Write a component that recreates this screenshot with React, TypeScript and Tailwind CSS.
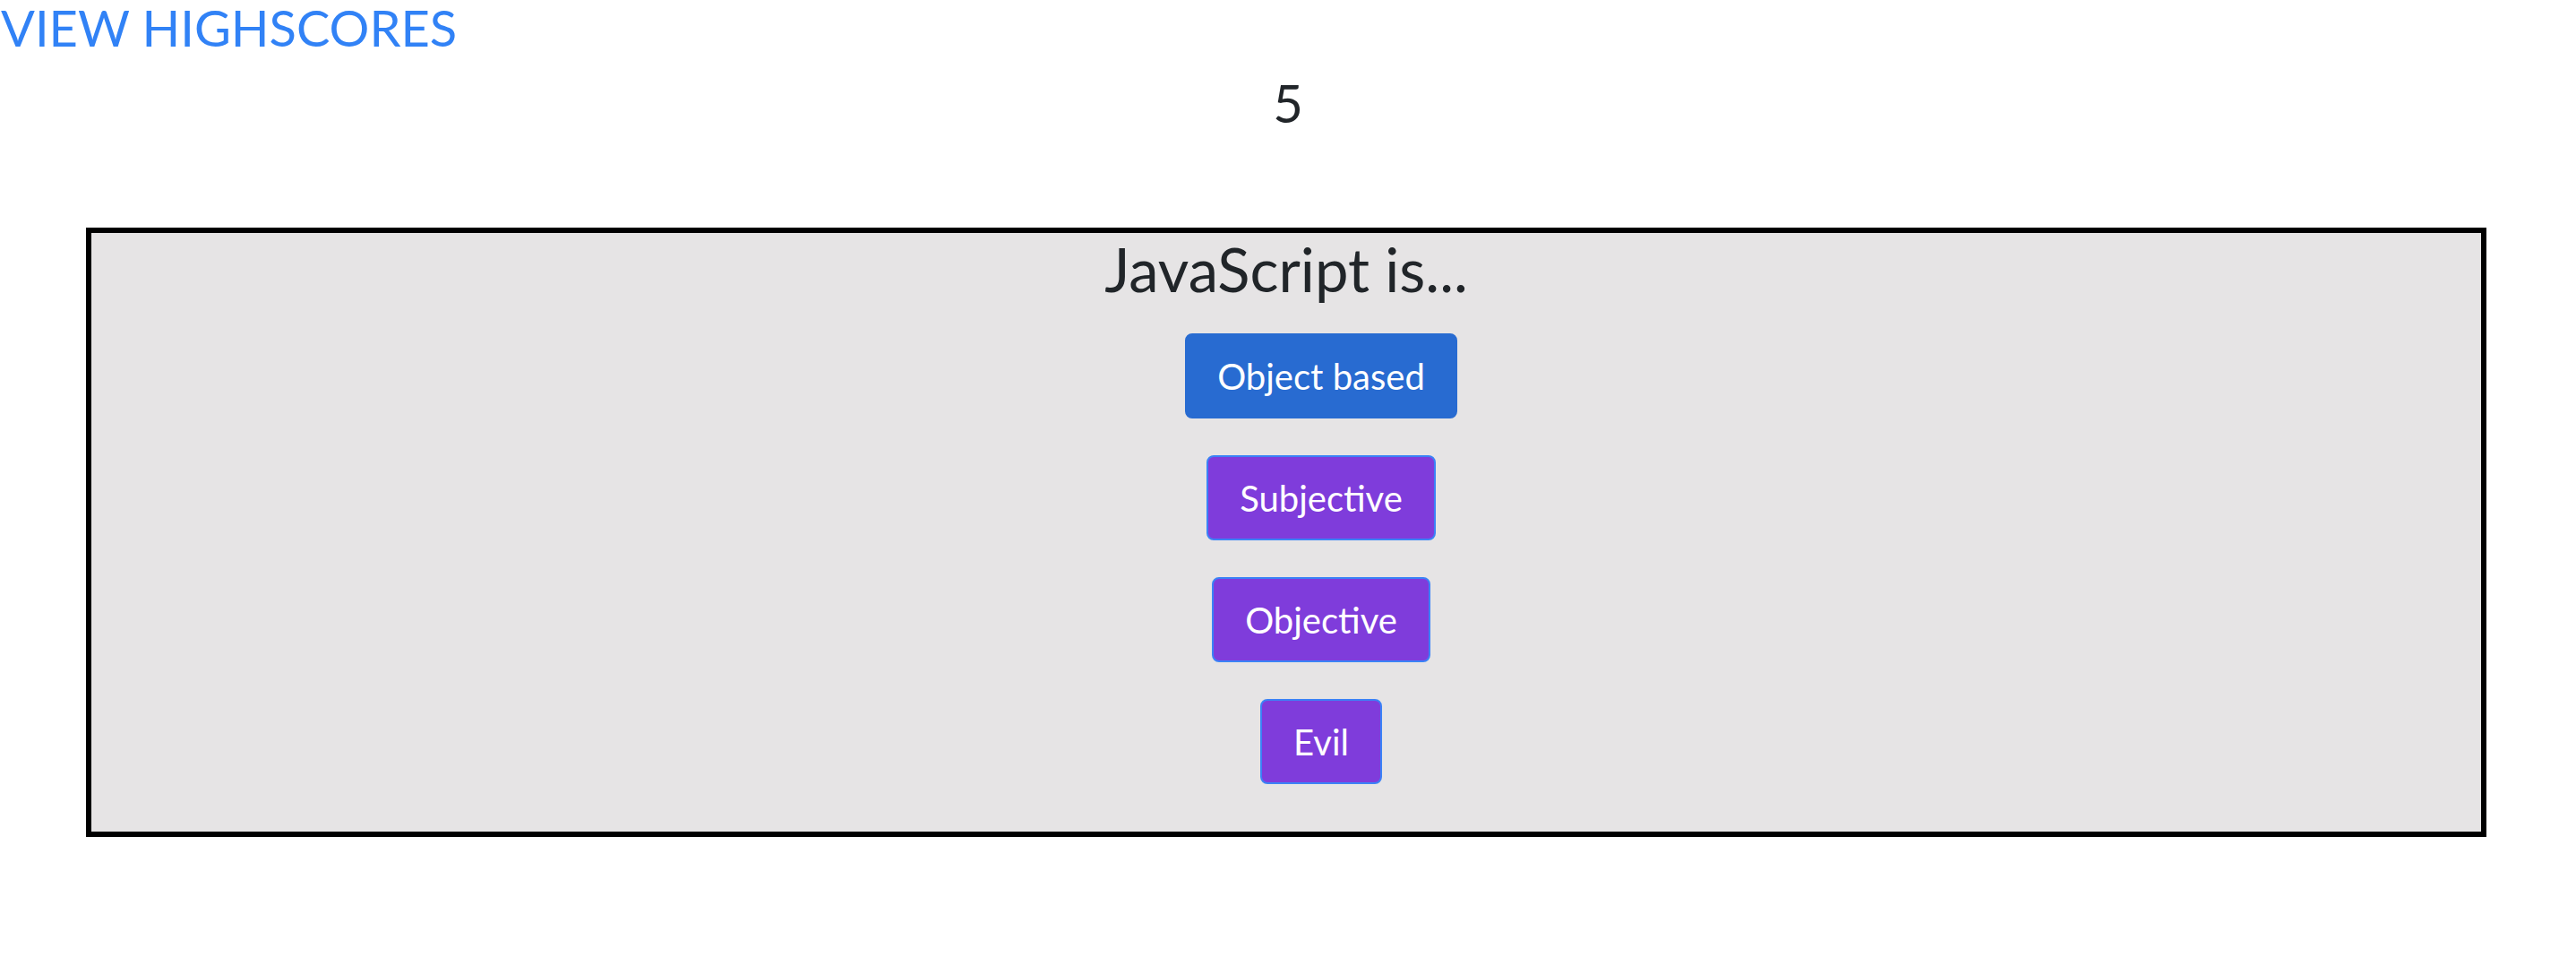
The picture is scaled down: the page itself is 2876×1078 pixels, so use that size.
const answers = [
  { label: "Object based", active: true },
  { label: "Subjective", active: false },
  { label: "Objective", active: false },
  { label: "Evil", active: false },
];

export default function App() {
  return (
    <main
      className="min-h-screen bg-white text-[#212529]"
      style={{ fontFamily: "Lato, 'Noto Sans', sans-serif" }}
    >
      <header className="flex flex-col">
        <a className="self-start pl-[1px] text-[56px] leading-[62px] text-[#3182f6]" href="#">
          VIEW HIGHSCORES
        </a>
        <div className="mt-[24px] text-center text-[58px] leading-[58px]">5</div>
      </header>

      <section className="mt-[110px] ml-[96px] mr-[100px] h-[680px] border-[6px] border-black bg-[#e6e4e5]">
        <h2 className="pt-[2px] text-center text-[67px] leading-[76px]">JavaScript is...</h2>
        <ul className="mt-[34px] flex flex-col items-center gap-[41px] pl-[78px]">
          {answers.map((a) => (
            <li key={a.label}>
              <AnswerButton label={a.label} active={a.active} />
            </li>
          ))}
        </ul>
      </section>
    </main>
  );
}

interface AnswerButtonProps {
  label: string;
  active: boolean;
}

function AnswerButton({ label, active }: AnswerButtonProps) {
  return (
    <button
      className={
        active
          ? "h-[95px] rounded-[8px] border-2 border-[#286bd1] bg-[#286bd1] px-[34px] text-[40px] text-white"
          : "h-[95px] rounded-[8px] border-2 border-[#3b82f6] bg-[#7f3cdb] px-[35px] text-[40px] text-white"
      }
    >
      {label}
    </button>
  );
}
